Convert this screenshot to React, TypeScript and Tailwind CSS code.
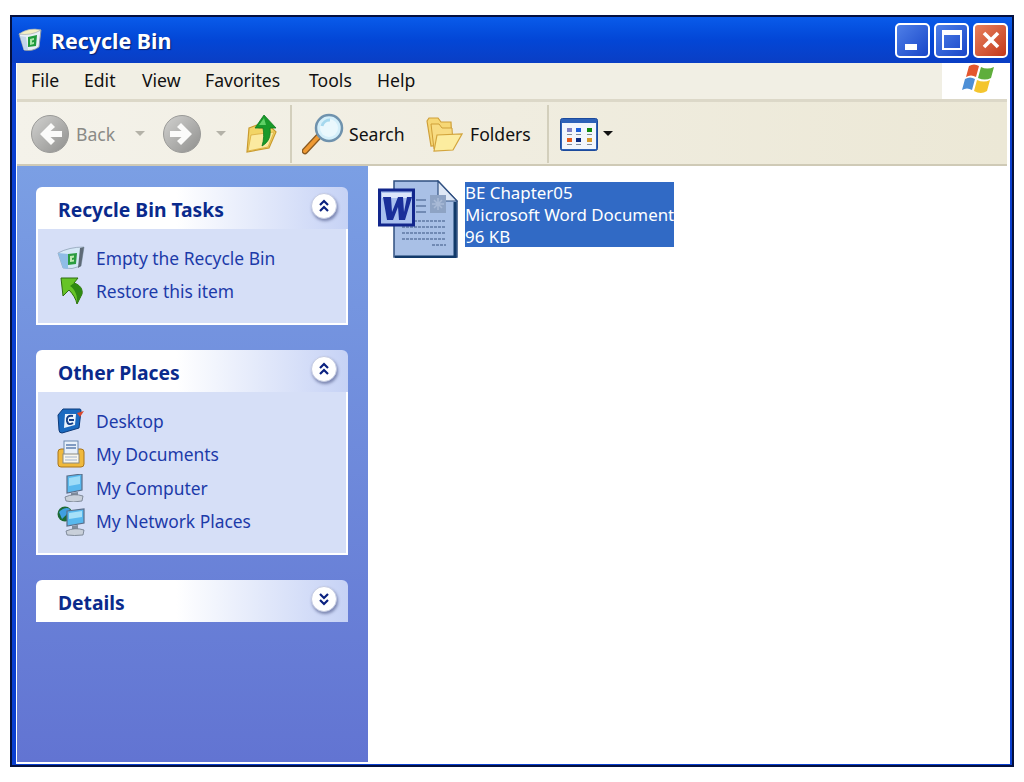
const BinIcon = ({ size = 26 }: { size?: number }) => (
  <svg width={size} height={size} viewBox="0 0 26 26">
    <path d="M1 7 L23 3 L21 20 Q14 25 6 23 Z" fill="#e8eef6" stroke="#8b98a8" strokeWidth="1" />
    <path d="M1 7 Q11 0 23 3 Q13 9 1 7Z" fill="#f3eec4" stroke="#a4aeb6" strokeWidth="0.7" />
    <path d="M2 9 L8 10 L10 23 L6 23 Z" fill="#c4d6ea" />
    <path d="M10 10 L19 8 L18 19 L10 20 Z" fill="#1f9a3c" />
    <path d="M12 12 L16 11 V13 L14 13.5 V15.5 L16 15 V17 L12 18 Z" fill="#a8e6a8" />
  </svg>
);

const BackCircle = ({ flip }: { flip?: boolean }) => (
  <svg width="38" height="38" viewBox="0 0 38 38">
    <defs>
      <linearGradient id={flip ? "navF" : "navB"} x1="0" y1="0" x2="1" y2="1">
        <stop offset="0" stopColor="#d2d2d0" />
        <stop offset="1" stopColor="#8f8f8d" />
      </linearGradient>
    </defs>
    <circle cx="19" cy="19" r="18.5" fill={`url(#${flip ? "navF" : "navB"})`} stroke="#9a9a98" />
    <g transform={flip ? "matrix(-1 0 0 1 38 0)" : undefined}>
      <path d="M20 8 L9 19 L20 30 L24 26 L19.5 22 H31 V16 H19.5 L24 12 Z" fill="#fbfbfa" />
    </g>
  </svg>
);

const UpIcon = () => (
  <svg width="32" height="38" viewBox="0 0 32 38">
    <path d="M4 13 L12 10 L14 13 L27 13 L31 17 L24 33 L2 37 Z" fill="#f2d566" stroke="#c99a2e" strokeWidth="1.2" />
    <path d="M6 20 L29 17 L23 32 L3 36 Z" fill="#fbeaa0" stroke="#d9ac3e" strokeWidth="0.8" />
    <path d="M19 0 L31 13 L25 13 C26 21 24 27 17 31 C19 25 19 18 18 13 L10 13 Z" fill="#189a2a" stroke="#0f7a20" strokeWidth="0.8" />
    <path d="M19 3 L14 10 L21 10 Z" fill="#5fd066" />
  </svg>
);

const SearchIcon = () => (
  <svg width="42" height="42" viewBox="0 0 42 42">
    <path d="M3 38 L17 23" stroke="#8a5a22" strokeWidth="6.5" strokeLinecap="round" />
    <path d="M3 38 L17 23" stroke="#ef9a33" strokeWidth="4" strokeLinecap="round" />
    <circle cx="27" cy="15" r="13" fill="#d4effa" stroke="#6f92ad" strokeWidth="2.5" />
    <circle cx="27" cy="15" r="9" fill="#eaf8fd" />
    <path d="M20 13 A8 8 0 0 1 28 7" stroke="#a5d8ee" strokeWidth="3" fill="none" />
  </svg>
);

const FoldersIcon = () => (
  <svg width="38" height="36" viewBox="0 0 38 36">
    <path d="M2 5 L4 2 L13 2 L16 6 L26 6 L27 28 L6 30 Z" fill="#f6d775" stroke="#cf9f38" strokeWidth="1.2" />
    <path d="M6 8 L14 8 L17 12 L27 12 L28 30 L9 33 Z" fill="#f8dc82" stroke="#cf9f38" strokeWidth="1" />
    <path d="M12 19 L37 18 L28 34 L9 35 Z" fill="#fcec9f" stroke="#d3a53c" strokeWidth="1.2" />
  </svg>
);

const ViewsIcon = () => (
  <svg width="38" height="33" viewBox="0 0 38 33">
    <rect x="0.5" y="0.5" width="37" height="32" rx="2" fill="#2d62b8" stroke="#1c4a9c" />
    <rect x="2" y="5" width="34" height="26" fill="#f2f6fc" />
    <rect x="7" y="10" width="5" height="4" fill="#7f80c4" />
    <rect x="16" y="10" width="5" height="4" fill="#1c5fdc" />
    <rect x="27" y="10" width="5" height="4" fill="#108a10" />
    <rect x="7" y="16" width="5" height="1" fill="#7f8a9c" />
    <rect x="16" y="16" width="5" height="1" fill="#7f8a9c" />
    <rect x="27" y="16" width="5" height="1" fill="#7f8a9c" />
    <rect x="7" y="20" width="5" height="4" fill="#e65a1c" />
    <rect x="16" y="20" width="5" height="4" fill="#0c2a80" />
    <rect x="27" y="20" width="5" height="4" fill="#d69a2c" />
    <rect x="7" y="26" width="5" height="1" fill="#7f8a9c" />
    <rect x="16" y="26" width="5" height="1" fill="#7f8a9c" />
    <rect x="27" y="26" width="5" height="1" fill="#7f8a9c" />
  </svg>
);

const XpFlag = () => (
  <svg width="34" height="32" viewBox="0 0 34 32">
    <path d="M7 3 Q12 0 17 3 L14 14 Q9 11 4 14 Z" fill="#e4572e" />
    <path d="M19 4 Q25 7 32 4 L29 15 Q23 18 16 15 Z" fill="#5fae3c" />
    <path d="M3 16 Q8 13 13 16 L10 27 Q5 24 0 27 Z" fill="#4d8fd6" />
    <path d="M15 17 Q22 20 28 17 L25 28 Q19 32 12 28 Z" fill="#f4c52e" />
  </svg>
);

const EmptyIcon = () => (
  <svg width="28" height="26" viewBox="0 0 28 26">
    <path d="M1 8 Q12 2 27 2 L24 21 Q15 25 6 23 Z" fill="#d5e8f7" stroke="#8fa2b6" strokeWidth="0.8" />
    <path d="M1 8 L11 9 L11 24 L6 23 Z" fill="#8fbde6" />
    <path d="M11 9 L20 8 L19 19 L11 20 Z" fill="#2a9c40" />
    <path d="M13 11 L17 10.5 V12.5 L15 13 V15 L17 14.5 V16.5 L13 17 Z" fill="#bdeab0" />
    <path d="M23 3 L27 2 L24 21 L21 23 Z" fill="#5e6a76" />
  </svg>
);

const RestoreIcon = () => (
  <svg width="24" height="28" viewBox="0 0 24 28">
    <path d="M1 1 H18 L14 6 C20 8 23 12 22 17 L17 27 C16 22 13 17 9 13 L3 19 Z" fill="#66c426" stroke="#2f6d10" strokeWidth="1" />
    <path d="M14 6 C20 8 23 12 22 17 L17 27 C18 19 15 12 10 9 Z" fill="#2f8a12" />
  </svg>
);

const DesktopIcon = () => (
  <svg width="28" height="26" viewBox="0 0 28 26">
    <path d="M6 1 H23 Q24 1 24 3 L22 20 L5 25 Q2 25 2 22 L1 7 Z" fill="#1a6ac0" stroke="#0d3a7a" strokeWidth="1" />
    <path d="M8 6 H19 L18 17 L7 20 Z" fill="#e8f3fc" />
    <path d="M16 8 Q9 7 10 13 Q11 18 16 15 M12 12 H17" stroke="#143f88" strokeWidth="2" fill="none" />
    <path d="M20 5 L27 3 L23 9Z" fill="#d8482c" />
  </svg>
);

const DocsIcon = () => (
  <svg width="28" height="28" viewBox="0 0 28 28">
    <rect x="1" y="9" width="26" height="18" rx="3" fill="#f0b93c" stroke="#a8751c" />
    <rect x="7" y="1" width="14" height="14" fill="#e8f0fa" stroke="#6c8ab0" />
    <path d="M9 5 H19 M9 8 H19" stroke="#5d7fb0" strokeWidth="1.4" />
    <rect x="6" y="14" width="16" height="9" fill="#f8f6ee" stroke="#8a8a80" />
    <path d="M8 17 H20 M8 20 H20" stroke="#9fb2cc" />
  </svg>
);

const ComputerIcon = () => (
  <svg width="26" height="28" viewBox="0 0 26 28" className="ml-[4px]">
    <path d="M6 2 L21 0 L21 16 L6 19 Z" fill="#58b8ee" stroke="#5a6d88" strokeWidth="1.2" />
    <path d="M8 4 L19 2 L19 10 L8 12 Z" fill="#9ddcf8" />
    <path d="M10 19 L17 18 L17 22 L10 22Z" fill="#7f8c9c" />
    <path d="M4 23 Q13 19 22 22 L21 27 Q12 29 5 27 Z" fill="#c9d0da" stroke="#6d7888" strokeWidth="0.8" />
  </svg>
);

const NetworkIcon = () => (
  <svg width="30" height="30" viewBox="0 0 30 30">
    <circle cx="8" cy="8" r="7.5" fill="#1c6a34" />
    <path d="M2 6 Q8 0 13 3 Q10 9 5 13Z" fill="#3f9fe0" />
    <path d="M10 5 L27 3 L27 17 L10 20 Z" fill="#58b8ee" stroke="#5a6d88" strokeWidth="1.2" />
    <path d="M12 7 L25 5 L25 11 L12 13 Z" fill="#a6e0f8" />
    <path d="M15 20 L21 19 L21 23 L15 23Z" fill="#7f8c9c" />
    <path d="M9 25 Q18 21 27 24 L26 29 Q17 30 10 29 Z" fill="#c9d0da" stroke="#6d7888" strokeWidth="0.8" />
  </svg>
);

const WordIcon = () => (
  <svg width="80" height="78" viewBox="0 0 80 78">
    <path d="M16 1 H60 L79 21 V77 H16 Z" fill="#a9c0e6" stroke="#2f4f80" strokeWidth="1.5" />
    <path d="M77 22 V77 H17" stroke="#123a6a" strokeWidth="3" fill="none" />
    <path d="M60 1 V21 H79 Z" fill="#dfe8f6" stroke="#2f4f80" strokeWidth="1.2" />
    <rect x="52" y="15" width="16" height="18" fill="#8ea3c4" />
    <path d="M56 20 L64 28 M64 20 L56 28 M60 18 V30 M54 24 H66" stroke="#a9bad6" strokeWidth="1.6" />
    <path d="M38 20 H48 M38 26 H48 M38 32 H48" stroke="#5f78a4" strokeWidth="1.6" />
    <path d="M24 41 H68 M24 47 H68 M24 53 H68 M24 59 H68 M54 65 H68" stroke="#5f78a4" strokeWidth="1.6" strokeDasharray="3 1" />
    <rect x="1.5" y="10" width="34" height="35" fill="#a9c0ee" stroke="#12268c" strokeWidth="3" />
    <rect x="4" y="13" width="29" height="5" fill="#dce6fa" />
    <path d="M5 17 H13 L14 32 L20 17 H25 L26 32 L29 17 H34 L27 40 H21 L20 27 L15 40 H9 Z" fill="#1a2f9a" />
  </svg>
);

const CollapseBtn = ({ down }: { down?: boolean }) => (
  <span className="flex h-[26px] w-[26px] items-center justify-center rounded-full border border-[#c4cbe2] bg-white shadow-[1px_2px_3px_rgba(70,80,130,0.6)]">
    <svg width="14" height="14" viewBox="0 0 14 14" className={down ? "rotate-180" : ""}>
      <path d="M3 6 L7 2 L11 6 M3 12 L7 8 L11 12" stroke="#0a2180" strokeWidth="2.2" fill="none" />
    </svg>
  </span>
);

const TaskLink = ({ icon, label }: { icon: React.ReactNode; label: string }) => (
  <div className="flex h-[33.5px] items-center">
    <span className="flex w-[39px] justify-start">{icon}</span>
    <span className="text-[17.4px] text-[#1c3aa9]">{label}</span>
  </div>
);

const Panel = ({
  title,
  down,
  children,
  bodyClass,
}: {
  title: string;
  down?: boolean;
  children?: React.ReactNode;
  bodyClass?: string;
}) => (
  <div className="w-[312px]">
    <div className="flex h-[42px] items-center justify-between rounded-t-[6px] bg-gradient-to-r from-white from-45% to-[#c6d2f5] pl-[22px] pr-[11px]">
      <span className="pt-[4px] text-[19.3px] font-bold text-[#0a2a8c]">{title}</span>
      <span className="-mt-[4px]">
        <CollapseBtn down={down} />
      </span>
    </div>
    {children && (
      <div className={`border-x-2 border-b-2 border-white bg-[#d6dff7] pl-[19px] ${bodyClass ?? ""}`}>{children}</div>
    )}
  </div>
);

const Grip = () => (
  <svg width="10" height="6" viewBox="0 0 10 6">
    <path d="M0 0 H10 L5 5 Z" fill="#b4b2a8" />
  </svg>
);

const App = () => {
  const menus = [
    { label: "File", w: "w-[53px]" },
    { label: "Edit", w: "w-[58px]" },
    { label: "View", w: "w-[63px]" },
    { label: "Favorites", w: "w-[104px]" },
    { label: "Tools", w: "w-[68px]" },
    { label: "Help", w: "w-[60px]" },
  ];

  return (
    <div className="h-[782px] w-[1024px] bg-white pl-[10px] pt-[15px] font-['Noto_Sans',sans-serif]">
      <div className="flex h-[752px] w-[1004px] flex-col border-2 border-[#04103e] bg-[#0a3fd0]">
        {/* title bar */}
        <div className="flex h-[46px] shrink-0 items-center justify-between bg-gradient-to-b from-[#0a5bea] via-[#0346d6] to-[#0a3ec4] pl-[6px] pr-[4px]">
          <div className="flex items-center gap-[7px]">
            <BinIcon />
            <span className="pt-[2px] text-[21.4px] font-bold text-white [text-shadow:1px_1px_1px_#0a1f70]">Recycle Bin</span>
          </div>
          <div className="flex gap-[4px]">
            <span className="flex h-[35px] w-[35px] items-end justify-start rounded-[5px] border-2 border-white bg-gradient-to-br from-[#4f7fe8] to-[#1a45c8] pb-[6px] pl-[8px]">
              <span className="h-[6px] w-[12px] bg-white" />
            </span>
            <span className="flex h-[35px] w-[35px] items-center justify-center rounded-[5px] border-2 border-white bg-gradient-to-br from-[#4f7fe8] to-[#1a45c8]">
              <span className="h-[20px] w-[20px] border-2 border-t-[5px] border-white" />
            </span>
            <span className="flex h-[35px] w-[35px] items-center justify-center rounded-[5px] border-2 border-white bg-gradient-to-br from-[#e8805c] to-[#c2371a]">
              <svg width="20" height="20" viewBox="0 0 20 20">
                <path d="M3 3 L17 17 M17 3 L3 17" stroke="white" strokeWidth="3.6" />
              </svg>
            </span>
          </div>
        </div>

        {/* frame */}
        <div className="flex min-h-0 flex-1 flex-col pb-[1px] pl-[4px] pr-[2px]">
          <div className="flex min-h-0 flex-1 flex-col border-b-2 border-l border-r-2 border-white bg-white">
            {/* menu bar */}
            <div className="mr-[1px] flex h-[39px] shrink-0 border-b-[3px] border-[#dcd8c8] bg-[#f1efe4]">
              <div className="flex flex-1 items-center pb-[2px] pl-[14px] text-[17.6px] text-[#111111]">
                {menus.map((m) => (
                  <span key={m.label} className={m.w}>
                    {m.label}
                  </span>
                ))}
              </div>
              <div className="flex w-[65px] items-center justify-center bg-white pb-[4px] pl-[8px]">
                <XpFlag />
              </div>
            </div>

            {/* toolbar */}
            <div className="mr-[1px] flex h-[64px] shrink-0 items-center border-b-2 border-[#cfcab6] bg-gradient-to-r from-[#f4f2ea] to-[#ece8d6] pl-[14px] pt-[2px] text-[17.6px] text-[#111111]">
              <BackCircle />
              <span className="ml-[7px] w-[59px] text-[#8a8a86]">Back</span>
              <Grip />
              <span className="ml-[18px]">
                <BackCircle flip />
              </span>
              <span className="ml-[15px]">
                <Grip />
              </span>
              <span className="ml-[19px]">
                <UpIcon />
              </span>
              <span className="ml-[13px] h-[58px] w-[2px] bg-[#d3cfbc]" />
              <span className="ml-[10px]">
                <SearchIcon />
              </span>
              <span className="ml-[5px] w-[76px]">Search</span>
              <FoldersIcon />
              <span className="ml-[7px] w-[77px]">Folders</span>
              <span className="h-[58px] w-[2px] bg-[#d3cfbc]" />
              <span className="ml-[11px]">
                <ViewsIcon />
              </span>
              <svg width="10" height="6" viewBox="0 0 10 6" className="ml-[5px]">
                <path d="M0 0 H10 L5 5 Z" fill="#111111" />
              </svg>
            </div>

            {/* body */}
            <div className="flex min-h-0 flex-1">
              <aside className="flex w-[351px] shrink-0 flex-col gap-[25px] bg-gradient-to-b from-[#7b9fe4] to-[#6274d2] pl-[19px] pt-[21px]">
                <Panel title="Recycle Bin Tasks" bodyClass="h-[96px] pt-[12px]">
                  <TaskLink icon={<EmptyIcon />} label="Empty the Recycle Bin" />
                  <TaskLink
                    icon={
                      <span className="ml-[3px]">
                        <RestoreIcon />
                      </span>
                    }
                    label="Restore this item"
                  />
                </Panel>
                <Panel title="Other Places" bodyClass="h-[163px] pt-[12px]">
                  <TaskLink icon={<DesktopIcon />} label="Desktop" />
                  <TaskLink icon={<DocsIcon />} label="My Documents" />
                  <TaskLink icon={<ComputerIcon />} label="My Computer" />
                  <TaskLink icon={<NetworkIcon />} label="My Network Places" />
                </Panel>
                <Panel title="Details" down />
              </aside>
              <main className="flex flex-1 items-start gap-[7px] pl-[10px] pt-[14px]">
                <WordIcon />
                <div className="mt-[2px] h-[65px] w-[209px] overflow-hidden bg-[#316ac5] text-[16.9px] leading-[22px] text-white">
                  <div>BE Chapter05</div>
                  <div className="whitespace-nowrap">Microsoft Word Document</div>
                  <div>96 KB</div>
                </div>
              </main>
            </div>
          </div>
        </div>
      </div>
    </div>
  );
};

export default App;
